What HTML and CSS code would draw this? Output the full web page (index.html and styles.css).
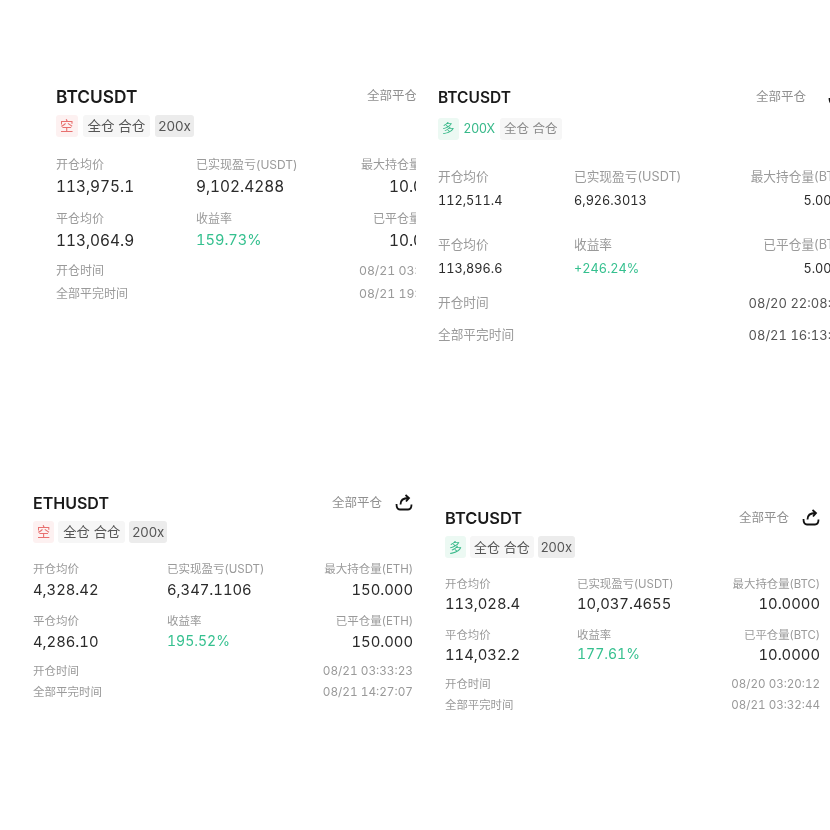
FILE: index.html
```html
<!DOCTYPE html>
<html lang="en">
<head>
    <meta charset="UTF-8">
    <meta name="viewport" content="width=device-width, initial-scale=1.0">
    <title>Positions</title>
    <link rel="stylesheet" href="styles.css">
</head>
<body>

<div class="collage">
    <div class="shot shot-a">
        <div class="panel">
            <div class="head">
                <span class="symbol">BTCUSDT</span>
                <span class="close-all">全部平仓</span>
                <svg class="share" viewBox="0 0 18 18"><path d="M1.5 10C1.5 14 3 15.5 5 15.5H13C15 15.5 16.5 14 16.5 10.5M5.5 10.5C5.5 6.5 8 4 13.5 4M10.5 1L14 4L11 7.5"/></svg>
            </div>
            <div class="tags">
                <span class="tag tag-short">空</span>
                <span class="tag">全仓 合仓</span>
                <span class="tag tag-dark">200x</span>
            </div>
            <div class="stats">
                <div><p class="label">开仓均价</p><p class="value">113,975.1</p></div>
                <div><p class="label">已实现盈亏(USDT)</p><p class="value">9,102.4288</p></div>
                <div class="right"><p class="label">最大持仓量(BTC)</p><p class="value">10.0000</p></div>
                <div><p class="label">平仓均价</p><p class="value">113,064.9</p></div>
                <div><p class="label">收益率</p><p class="value up">159.73%</p></div>
                <div class="right"><p class="label">已平仓量(BTC)</p><p class="value">10.0000</p></div>
            </div>
            <div class="times">
                <div class="time-row"><span>开仓时间</span><span class="time">08/21 03:33:12</span></div>
                <div class="time-row"><span>全部平完时间</span><span class="time">08/21 19:27:44</span></div>
            </div>
        </div>
    </div>

    <div class="shot shot-b">
        <div class="panel">
            <div class="head">
                <span class="symbol">BTCUSDT</span>
                <span class="close-all">全部平仓</span>
                <svg class="share" viewBox="0 0 18 18"><path d="M1.5 10C1.5 14 3 15.5 5 15.5H13C15 15.5 16.5 14 16.5 10.5M5.5 10.5C5.5 6.5 8 4 13.5 4M10.5 1L14 4L11 7.5"/></svg>
            </div>
            <div class="tags">
                <span class="tag tag-long">多</span>
                <span class="tag tag-plain">200X</span>
                <span class="tag">全仓 合仓</span>
            </div>
            <div class="stats">
                <div><p class="label">开仓均价</p><p class="value">112,511.4</p></div>
                <div><p class="label">已实现盈亏(USDT)</p><p class="value">6,926.3013</p></div>
                <div class="right"><p class="label">最大持仓量(BTC)</p><p class="value">5.0000</p></div>
                <div><p class="label">平仓均价</p><p class="value">113,896.6</p></div>
                <div><p class="label">收益率</p><p class="value up">+246.24%</p></div>
                <div class="right"><p class="label">已平仓量(BTC)</p><p class="value">5.0000</p></div>
            </div>
            <div class="times">
                <div class="time-row"><span>开仓时间</span><span class="time">08/20 22:08:31</span></div>
                <div class="time-row"><span>全部平完时间</span><span class="time">08/21 16:13:25</span></div>
            </div>
        </div>
    </div>

    <div class="shot shot-c">
        <div class="panel">
            <div class="head">
                <span class="symbol">ETHUSDT</span>
                <span class="close-all">全部平仓</span>
                <svg class="share" viewBox="0 0 18 18"><path d="M1.5 10C1.5 14 3 15.5 5 15.5H13C15 15.5 16.5 14 16.5 10.5M5.5 10.5C5.5 6.5 8 4 13.5 4M10.5 1L14 4L11 7.5"/></svg>
            </div>
            <div class="tags">
                <span class="tag tag-short">空</span>
                <span class="tag">全仓 合仓</span>
                <span class="tag tag-dark">200x</span>
            </div>
            <div class="stats">
                <div><p class="label">开仓均价</p><p class="value">4,328.42</p></div>
                <div><p class="label">已实现盈亏(USDT)</p><p class="value">6,347.1106</p></div>
                <div class="right"><p class="label">最大持仓量(ETH)</p><p class="value">150.000</p></div>
                <div><p class="label">平仓均价</p><p class="value">4,286.10</p></div>
                <div><p class="label">收益率</p><p class="value up">195.52%</p></div>
                <div class="right"><p class="label">已平仓量(ETH)</p><p class="value">150.000</p></div>
            </div>
            <div class="times">
                <div class="time-row"><span>开仓时间</span><span class="time">08/21 03:33:23</span></div>
                <div class="time-row"><span>全部平完时间</span><span class="time">08/21 14:27:07</span></div>
            </div>
        </div>
    </div>

    <div class="shot shot-d">
        <div class="panel">
            <div class="head">
                <span class="symbol">BTCUSDT</span>
                <span class="close-all">全部平仓</span>
                <svg class="share" viewBox="0 0 18 18"><path d="M1.5 10C1.5 14 3 15.5 5 15.5H13C15 15.5 16.5 14 16.5 10.5M5.5 10.5C5.5 6.5 8 4 13.5 4M10.5 1L14 4L11 7.5"/></svg>
            </div>
            <div class="tags">
                <span class="tag tag-long">多</span>
                <span class="tag">全仓 合仓</span>
                <span class="tag tag-dark">200x</span>
            </div>
            <div class="stats">
                <div><p class="label">开仓均价</p><p class="value">113,028.4</p></div>
                <div><p class="label">已实现盈亏(USDT)</p><p class="value">10,037.4655</p></div>
                <div class="right"><p class="label">最大持仓量(BTC)</p><p class="value">10.0000</p></div>
                <div><p class="label">平仓均价</p><p class="value">114,032.2</p></div>
                <div><p class="label">收益率</p><p class="value up">177.61%</p></div>
                <div class="right"><p class="label">已平仓量(BTC)</p><p class="value">10.0000</p></div>
            </div>
            <div class="times">
                <div class="time-row"><span>开仓时间</span><span class="time">08/20 03:20:12</span></div>
                <div class="time-row"><span>全部平完时间</span><span class="time">08/21 03:32:44</span></div>
            </div>
        </div>
    </div>
</div>

</body>
</html>
```

FILE: styles.css
```css
body {
    font-family: Inter, "Noto Sans CJK SC", sans-serif;
    background-color: white;
    margin: 0;
}
p {
    margin: 0;
}
.collage {
    display: grid;
    grid-template-columns: 416px 414px;
    grid-template-rows: 420px 410px;
    width: 830px;
    height: 830px;
    overflow: hidden;
}
.shot {
    overflow: hidden;
}

/* each screenshot in the collage has its own scale */
.shot-a {
    padding: 84px 0 0 56px;
    --width: 397px;
    --col: 140px;
    --head-inset: 5px;
    --share-gap: 13px;
    --tags-gap: 7px;
    --tag-size: 13.5px;
    --tag-pad: 5px;
    --tag-gap: 5px;
    --tag-color: #555;
    --stats-top: 20px;
    --value-gap: 3px;
    --row-gap: 13px;
    --times-top: 10px;
    --times-gap: 5px;
    --label-size: 12px;
    --value-size: 15.4px;
    --up-size: 14.6px;
    --up-shift: -1px;
    --time-size: 12.3px;
    --title-size: 17.3px;
}
.shot-b {
    padding: 85px 0 0 22px;
    --width: 410px;
    --col: 136px;
    --head-inset: 2px;
    --share-gap: 22px;
    --tags-gap: 9px;
    --tag-size: 12.5px;
    --tag-pad: 4px;
    --tag-gap: 4px;
    --tag-color: #8a8a8a;
    --stats-top: 29px;
    --value-gap: 5px;
    --row-gap: 25px;
    --times-top: 14px;
    --times-gap: 14px;
    --label-size: 12.7px;
    --value-size: 12.7px;
    --up-size: 12.7px;
    --up-shift: 0px;
    --time-size: 13px;
    --title-size: 15.5px;
}
.shot-c {
    padding: 71px 0 0 33px;
    --width: 380px;
    --col: 134px;
    --head-inset: 0px;
    --share-gap: 13px;
    --tags-gap: 6px;
    --tag-size: 13.3px;
    --tag-pad: 5px;
    --tag-gap: 4px;
    --tag-color: #555;
    --stats-top: 18px;
    --value-gap: 2px;
    --row-gap: 12px;
    --times-top: 9px;
    --times-gap: 3px;
    --label-size: 11.5px;
    --value-size: 14.8px;
    --up-size: 14px;
    --up-shift: -1px;
    --time-size: 11.8px;
    --title-size: 16px;
}
.shot-d {
    padding: 86px 0 0 29px;
    --width: 375px;
    --col: 132px;
    --head-inset: 0px;
    --share-gap: 13px;
    --tags-gap: 6px;
    --tag-size: 13px;
    --tag-pad: 4px;
    --tag-gap: 4px;
    --tag-color: #555;
    --stats-top: 18px;
    --value-gap: 1px;
    --row-gap: 12px;
    --times-top: 9px;
    --times-gap: 3px;
    --label-size: 11.4px;
    --value-size: 14.8px;
    --up-size: 14px;
    --up-shift: -1px;
    --time-size: 11.6px;
    --title-size: 16.4px;
}

.panel {
    width: var(--width);
    filter: blur(0.3px);
}
.head {
    display: flex;
    align-items: center;
    height: 24px;
    padding-right: var(--head-inset);
}
.symbol {
    font-size: var(--title-size);
    font-weight: 600;
    color: #1a1a1a;
    margin-right: auto;
}
.close-all {
    font-size: 12.5px;
    color: #8f8f8f;
    margin-top: -3px;
}
.share {
    width: 18px;
    height: 18px;
    margin-left: var(--share-gap);
    fill: none;
    stroke: #111;
    stroke-width: 1.8;
}
.tags {
    display: flex;
    gap: var(--tag-gap);
    margin-top: var(--tags-gap);
}
.tag {
    height: 22px;
    line-height: 22px;
    padding: 0 var(--tag-pad);
    font-size: var(--tag-size);
    color: var(--tag-color);
    background-color: #f6f6f6;
    border-radius: 3px;
}
.tag-dark {
    color: #555;
    background-color: #ececec;
    padding: 0 3px;
}
.tag-short {
    color: #e8706f;
    background-color: #fdf1f1;
    padding: 0 4px;
}
.tag-long {
    color: #38b98a;
    background-color: #ecf9f3;
    padding: 0 4px;
}
.tag-plain {
    color: #38b98a;
    background-color: transparent;
    padding: 0 1px;
}
.stats {
    display: grid;
    grid-template-columns: var(--col) 1fr auto;
    row-gap: var(--row-gap);
    margin-top: var(--stats-top);
}
.right {
    text-align: right;
}
.label {
    font-size: var(--label-size);
    line-height: 16px;
    color: #9a9a9a;
}
.value {
    font-size: var(--value-size);
    font-variant-numeric: tabular-nums;
    line-height: 22px;
    color: #2b2b2b;
    margin-top: var(--value-gap);
}
.value.up {
    font-size: var(--up-size);
    color: #35c08f;
    transform: translateY(var(--up-shift));
}
.times {
    display: flex;
    flex-direction: column;
    gap: var(--times-gap);
    margin-top: var(--times-top);
}
.time-row {
    display: flex;
    justify-content: space-between;
    font-size: var(--label-size);
    line-height: 18px;
    color: #9a9a9a;
}
.time {
    font-size: var(--time-size);
    font-variant-numeric: tabular-nums;
}
.shot-b .time {
    color: #555;
}
```
